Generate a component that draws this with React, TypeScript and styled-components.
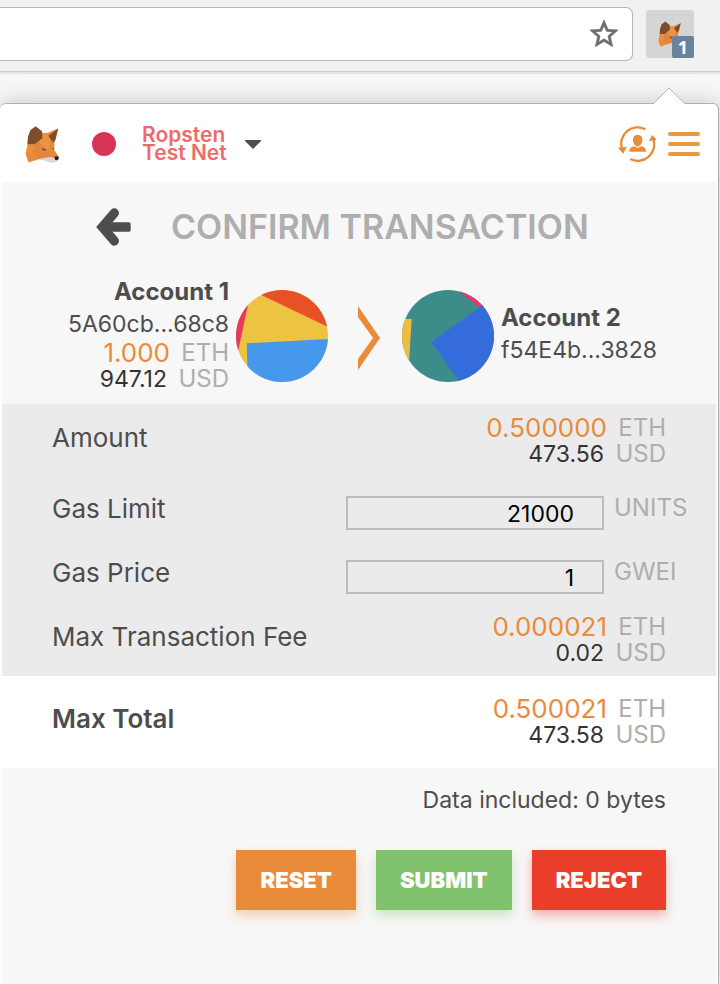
import React, { useState } from "react";
import styled, { createGlobalStyle } from "styled-components";

const GlobalStyle = createGlobalStyle`
  *, *::before, *::after { box-sizing: border-box; }
  body {
    margin: 0;
    background: #f7f7f7;
    color: #4d4d4d;
    font-family: Inter, "Open Sans", sans-serif;
  }
  button, input { font: inherit; }
  p, h1, h2 { margin: 0; }
`;

const Page = styled.div`
  display: flex;
  flex-direction: column;
  min-height: 100vh;
  overflow: hidden;
`;

const Toolbar = styled.div`
  display: flex;
  align-items: flex-start;
  gap: 13px;
  height: 74px;
  padding: 7px 26px 0 0;
  background: #f1f1f1;
  border-bottom: 2px solid #e4e4e4;
  box-shadow: inset 0 -1px 0 #cdcdcd;
`;

const AddressBar = styled.div`
  display: flex;
  flex: 1;
  align-items: center;
  height: 54px;
  padding-right: 11px;
  background: #fff;
  border: 1px solid #b4b4b4;
  border-left: 0;
  border-radius: 0 7px 7px 0;
`;

const AddressInput = styled.input`
  flex: 1;
  min-width: 0;
  border: 0;
  outline: 0;
  background: transparent;
`;

const IconButton = styled.button`
  display: flex;
  align-items: center;
  justify-content: center;
  padding: 0;
  border: 0;
  background: none;
  color: inherit;
  cursor: pointer;
`;

const ExtensionButton = styled(IconButton)`
  position: relative;
  width: 48px;
  height: 48px;
  margin-top: 3px;
  background: #d5d5d5;
  border-radius: 4px;
`;

const Badge = styled.span`
  position: absolute;
  right: 0;
  bottom: 0;
  width: 22px;
  height: 22px;
  border-radius: 2px;
  background: #69839c;
  color: #fff;
  font: 700 18px/22px "Open Sans", sans-serif;
  text-align: center;
`;

const Popup = styled.main`
  position: relative;
  display: flex;
  flex: 1;
  flex-direction: column;
  margin: 29px 1px 0 0;
  padding: 0 2px;
  background: #fff;
  border-top: 1px solid #b0b0b0;
  border-right: 1px solid #b0b0b0;
  border-radius: 6px 6px 0 0;
  box-shadow: 0 0 24px rgba(0, 0, 0, 0.2);
`;

const Pointer = styled.svg`
  position: absolute;
  top: -17px;
  right: 33px;
`;

const Header = styled.header`
  display: flex;
  align-items: center;
  height: 78px;
  padding: 2px 16px 0 23px;
`;

const Network = styled(IconButton)`
  gap: 18px;
  margin-left: 32px;
`;

const Dot = styled.span`
  width: 24px;
  height: 24px;
  margin-right: 8px;
  border-radius: 50%;
  background: #d73455;
`;

const NetworkName = styled.span`
  color: #ef6b6b;
  font-size: 21px;
  font-weight: 600;
  line-height: 18px;
  text-align: left;
`;

const Actions = styled.div`
  display: flex;
  align-items: center;
  gap: 12px;
  margin-left: auto;
`;

const TitleRow = styled.div`
  display: flex;
  align-items: center;
  gap: 39px;
  height: 90px;
  padding-left: 93px;
  background: #f7f7f7;
`;

const Title = styled.h1`
  color: #aeaeae;
  font-size: 34px;
  font-weight: 600;
  line-height: 40px;
  white-space: nowrap;
`;

const Transfer = styled.section`
  display: flex;
  align-items: center;
  height: 132px;
  padding: 0 0 4px 12px;
  background: #f7f7f7;
`;

const Account = styled.div<{ $align: "left" | "right" }>`
  flex: 1;
  margin: ${(p) => (p.$align === "right" ? "0 7px 4px 0" : "0 0 4px 7px")};
  text-align: ${(p) => p.$align};
  white-space: nowrap;
`;

const AccountName = styled.h2`
  font-size: 24px;
  font-weight: 700;
  line-height: 32px;
`;

const Address = styled.p`
  font-size: 23px;
  line-height: 32px;
`;

const Chevron = styled.svg`
  margin: 4px 22px 0 30px;
`;

const AmountGrid = styled.div`
  display: grid;
  grid-template-columns: 1fr 52px;
  column-gap: 10px;
  justify-items: end;
  line-height: 26px;
`;

const Ether = styled.span`
  margin-right: -3px;
  color: #ea8b3a;
  font-size: 26px;
`;

const Dollars = styled.span`
  color: #333;
  font-size: 23px;
`;

const Unit = styled.span`
  color: #aeaeae;
  font-size: 24px;
  white-space: nowrap;
`;

const Details = styled.section`
  padding: 3px 50px 0;
  background: #ebebeb;
`;

const Row = styled.div<{ $height: number }>`
  display: flex;
  align-items: center;
  justify-content: space-between;
  height: ${(p) => p.$height}px;
`;

const Label = styled.label`
  padding-bottom: 2px;
  font-size: 26px;
  line-height: 32px;
  white-space: nowrap;
`;

const AmountLabel = styled.span<{ $strong?: boolean }>`
  padding-bottom: 6px;
  font-size: 26px;
  font-weight: ${(p) => (p.$strong ? 600 : 400)};
  line-height: 32px;
  white-space: nowrap;
`;

const Field = styled.div`
  display: grid;
  grid-template-columns: 258px 52px;
  column-gap: 10px;
  align-items: start;
  padding-top: 6px;
  line-height: 24px;
`;

const NumberInput = styled.input`
  width: 100%;
  height: 34px;
  padding: 2px 28px 0 8px;
  border: 2px solid #bdbdbd;
  border-radius: 0;
  outline: 0;
  background: transparent;
  color: #000;
  font-size: 23px;
  text-align: right;
`;

const Total = styled.section`
  padding: 0 50px;
  background: #fff;
`;

const Footer = styled.footer`
  flex: 1;
  padding: 16px 50px 40px;
  background: #f7f7f7;
`;

const DataNote = styled.p`
  font-size: 23px;
  line-height: 32px;
  text-align: right;
`;

const Buttons = styled.div`
  display: flex;
  justify-content: flex-end;
  gap: 20px;
  margin-top: 34px;
`;

const ActionButton = styled.button<{ $color: string; $shadow: string }>`
  height: 60px;
  padding: 0 24px;
  border: 0;
  background: ${(p) => p.$color};
  box-shadow: 0 6px 10px ${(p) => p.$shadow};
  color: #fff;
  font-size: 22px;
  font-weight: 900;
  cursor: pointer;
`;

const Fox = ({ width, height }: { width: number; height: number }) => (
  <svg width={width} height={height} viewBox="75 76 105 111" aria-hidden="true">
    <path d="M84 128 L118 92 126 97 144 96 175 83 167 116 163 128 163 148 176 168 172 180 158 183 118 175 86 185 77 160Z" fill="#e78a3c" />
    <path d="M77 158 L84 129 104 130 112 150 100 152Z" fill="#ea9040" />
    <path d="M77 158 L100 152 118 174 86 185Z" fill="#e78a3d" />
    <path d="M124 98 L146 97 152 118 148 145 130 140 116 122Z" fill="#ea9344" />
    <path d="M104 132 L118 124 126 142 136 154 152 166 118 174 100 152Z" fill="#e4853b" />
    <path d="M107 77 L91 89 84 108 82 131 104 131 127 113 126 92Z" fill="#7c4d2b" />
    <path d="M174 84 L145 105 152 116 160 126 167 114Z" fill="#7c4d2b" />
    <path d="M118 174 L148 169 170 172 173 182 160 186 146 184Z" fill="#dfd5cd" />
    <path d="M125 143 L135 144 139 150 129 149Z" fill="#4b4f49" />
    <path d="M156 143 L161 142 160 148Z" fill="#684d38" />
    <path d="M163 168 L174 167 177 173 172 179 165 177Z" fill="#211f20" />
  </svg>
);

const StarIcon = () => (
  <svg width="34" height="34" viewBox="0 0 24 24" fill="#6b6b6b" stroke="#6b6b6b" strokeWidth="0.4" aria-hidden="true">
    <path d="M22 9.24l-7.19-.62L12 2 9.19 8.63 2 9.24l5.46 4.73L5.82 21 12 17.27 18.18 21l-1.63-7.03L22 9.24zM12 15.4l-3.76 2.27 1-4.28-3.32-2.88 4.38-.38L12 6.1l1.71 4.04 4.38.38-3.32 2.88 1 4.28L12 15.4z" />
  </svg>
);

const SwitchAccountIcon = () => (
  <svg width="38" height="37" viewBox="54 53 114 111" fill="#ea8b3a" aria-hidden="true">
    <g fill="none" stroke="#ea8b3a" strokeWidth="7">
      <path d="M136 63 A49 49 0 0 0 66 121" />
      <path d="M91 152 A49 49 0 0 0 160 93" />
    </g>
    <path d="M53 118 L80 115 70 136Z M147 99 L156 80 171 94Z" />
    <path d="M113 80 C103 80 98 86 99 96 C100 106 106 114 113 115 C120 114 126 106 127 96 C128 86 123 80 113 80Z" />
    <path d="M88 130 C88 119 94 116 104 114 L113 119 122 114 C132 116 138 119 138 130Z" />
  </svg>
);

const MenuIcon = () => (
  <svg width="32" height="26" viewBox="0 0 32 26" aria-hidden="true">
    <g stroke="#ec963d" strokeWidth="4" strokeLinecap="round">
      <path d="M2 3H30M2 13H30M2 23H30" />
    </g>
  </svg>
);

const BackIcon = () => (
  <svg width="37" height="38" viewBox="285 322 111 114" aria-hidden="true">
    <g fill="#4d4d4d" stroke="#4d4d4d" strokeLinecap="round">
      <path d="M343 337 L307 379 343 421" fill="none" strokeWidth="28" />
      <path d="M320 370H387V388H320Z" strokeWidth="10" strokeLinejoin="round" />
    </g>
  </svg>
);

const SenderAvatar = () => (
  <svg width="92" height="92" viewBox="48 60 276 276" role="img" aria-label="Account 1">
    <clipPath id="sender"><circle cx="186" cy="198" r="138" /></clipPath>
    <g clipPath="url(#sender)">
      <path d="M48 60H324V336H48Z" fill="#edc442" />
      <path d="M93 60 L330 174 V50Z" fill="#e85028" />
      <path d="M90 76 L54 246 H40 V76Z" fill="#e8385f" />
      <path d="M80 220 L330 207 V340 H84Z" fill="#4598eb" />
    </g>
  </svg>
);

const RecipientAvatar = () => (
  <svg width="92" height="92" viewBox="546 60 276 276" role="img" aria-label="Account 2">
    <clipPath id="recipient"><circle cx="684" cy="198" r="138" /></clipPath>
    <g clipPath="url(#recipient)">
      <path d="M546 60H822V336H546Z" fill="#3c8c8a" />
      <path d="M710 58 L785 118 830 80 V50Z" fill="#eb3767" />
      <path d="M634 216 L800 96 840 90 V350 H729Z" fill="#356cdc" />
      <path d="M540 146 L575 147 567 280 H540Z" fill="#edbd3f" />
    </g>
  </svg>
);

const Amount = ({ eth, usd }: { eth: string; usd: string }) => (
  <AmountGrid>
    <Ether>{eth}</Ether>
    <Unit>ETH</Unit>
    <Dollars>{usd}</Dollars>
    <Unit>USD</Unit>
  </AmountGrid>
);

export default function App() {
  const [gasLimit, setGasLimit] = useState("21000");
  const [gasPrice, setGasPrice] = useState("1");

  return (
    <Page>
      <GlobalStyle />
      <Toolbar>
        <AddressBar>
          <AddressInput aria-label="Address" />
          <IconButton aria-label="Bookmark this page"><StarIcon /></IconButton>
        </AddressBar>
        <ExtensionButton aria-label="MetaMask, 1 pending">
          <Fox width={24} height={26} />
          <Badge>1</Badge>
        </ExtensionButton>
      </Toolbar>
      <Popup>
        <Pointer width="32" height="18" viewBox="0 0 32 18" aria-hidden="true">
          <path d="M0 17 L16 1 32 17V18H0Z" fill="#fff" />
          <path d="M0 17 L16 1 32 17" fill="none" stroke="#b8b8b8" />
        </Pointer>
        <Header>
          <Fox width={35} height={37} />
          <Network>
            <Dot />
            <NetworkName>Ropsten<br />Test Net</NetworkName>
            <svg width="16" height="9" viewBox="0 0 16 9" aria-hidden="true">
              <path d="M0 0H16V1L8 9 0 1Z" fill="#4d4d4d" />
            </svg>
          </Network>
          <Actions>
            <IconButton aria-label="Switch account"><SwitchAccountIcon /></IconButton>
            <IconButton aria-label="Menu"><MenuIcon /></IconButton>
          </Actions>
        </Header>
        <TitleRow>
          <IconButton aria-label="Back"><BackIcon /></IconButton>
          <Title>CONFIRM TRANSACTION</Title>
        </TitleRow>
        <Transfer>
          <Account $align="right">
            <AccountName>Account 1</AccountName>
            <Address>5A60cb...68c8</Address>
            <Amount eth="1.000" usd="947.12" />
          </Account>
          <SenderAvatar />
          <Chevron width="22" height="64" viewBox="0 0 22 64" aria-hidden="true">
            <path d="M0 0 L22 32 0 64V53L15 32 0 11Z" fill="#ea8b3a" />
          </Chevron>
          <RecipientAvatar />
          <Account $align="left">
            <AccountName>Account 2</AccountName>
            <Address>f54E4b...3828</Address>
          </Account>
        </Transfer>
        <Details>
          <Row $height={68}>
            <AmountLabel>Amount</AmountLabel>
            <Amount eth="0.500000" usd="473.56" />
          </Row>
          <Row $height={70}>
            <Label htmlFor="gas-limit">Gas Limit</Label>
            <Field>
              <NumberInput id="gas-limit" inputMode="numeric" value={gasLimit} onChange={(e) => setGasLimit(e.target.value)} />
              <Unit>UNITS</Unit>
            </Field>
          </Row>
          <Row $height={58}>
            <Label htmlFor="gas-price">Gas Price</Label>
            <Field>
              <NumberInput id="gas-price" inputMode="numeric" value={gasPrice} onChange={(e) => setGasPrice(e.target.value)} />
              <Unit>GWEI</Unit>
            </Field>
          </Row>
          <Row $height={73}>
            <AmountLabel>Max Transaction Fee</AmountLabel>
            <Amount eth="0.000021" usd="0.02" />
          </Row>
        </Details>
        <Total>
          <Row $height={92}>
            <AmountLabel $strong>Max Total</AmountLabel>
            <Amount eth="0.500021" usd="473.58" />
          </Row>
        </Total>
        <Footer>
          <DataNote>Data included: 0 bytes</DataNote>
          <Buttons>
            <ActionButton $color="#ea8b3a" $shadow="rgba(234, 139, 58, 0.36)">RESET</ActionButton>
            <ActionButton $color="#81c26d" $shadow="rgba(129, 194, 109, 0.36)">SUBMIT</ActionButton>
            <ActionButton $color="#eb3e2a" $shadow="rgba(235, 62, 42, 0.36)">REJECT</ActionButton>
          </Buttons>
        </Footer>
      </Popup>
    </Page>
  );
}
